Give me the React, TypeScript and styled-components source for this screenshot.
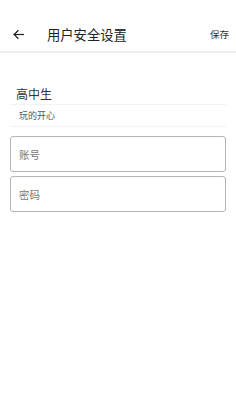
import React from "react";
import styled, { createGlobalStyle } from "styled-components";

const Global = createGlobalStyle`
  html, body { margin: 0; padding: 0; background: #fff; }
  body { font-family: Roboto, "Noto Sans CJK SC", sans-serif; }
`;

const Page = styled.div`
  width: 236px;
  height: 420px;
  background: #fff;
  display: flex;
  flex-direction: column;
`;

const Header = styled.div`
  height: 53px;
  padding-top: 17px;
  box-sizing: border-box;
  display: flex;
  align-items: center;
  border-bottom: 2px solid #eeeeee;
  padding-left: 12px;
  padding-right: 7px;
`;

const BackButton = styled.div`
  width: 13px;
  height: 13px;
  display: flex;
  align-items: center;
  justify-content: center;
  color: #222;
`;

const Title = styled.div`
  margin-left: 22px;
  font-size: 13.3px;
  color: #222;
  flex: 1;
`;

const Save = styled.div`
  font-size: 9.5px;
  color: #333;
`;

const Info = styled.div`
  padding: 0 10px;
  margin-top: 29px;
`;

const InfoRow = styled.div<{ $size: number; $color: string; $indent: number; $h: number }>`
  height: ${(p) => p.$h}px;
  display: flex;
  align-items: center;
  padding-left: ${(p) => p.$indent}px;
  font-size: ${(p) => p.$size}px;
  color: ${(p) => p.$color};
  border-bottom: 1px solid #f2f2f2;
`;

const Form = styled.div`
  padding: 0 10px;
  margin-top: 9px;
  display: flex;
  flex-direction: column;
  gap: 4px;
`;

const Field = styled.div`
  height: 34px;
  border: 1px solid #b5b5b5;
  border-radius: 3px;
  display: flex;
  align-items: center;
  padding-left: 8px;
  font-size: 10.5px;
  color: #777;
`;

export default function App() {
  return (
    <>
      <Global />
      <Page>
        <Header>
          <BackButton>
            <svg width="13" height="13" viewBox="0 0 24 24" fill="none" stroke="#222" strokeWidth="2.2" strokeLinecap="square">
              <path d="M21 12H4" />
              <path d="M11 5l-7 7 7 7" />
            </svg>
          </BackButton>
          <Title>用户安全设置</Title>
          <Save>保存</Save>
        </Header>
        <Info>
          <InfoRow $size={12} $color="#333" $indent={6} $h={22}>高中生</InfoRow>
          <InfoRow $size={9} $color="#555" $indent={9} $h={21}>玩的开心</InfoRow>
        </Info>
        <Form>
          <Field>账号</Field>
          <Field>密码</Field>
        </Form>
      </Page>
    </>
  );
}
